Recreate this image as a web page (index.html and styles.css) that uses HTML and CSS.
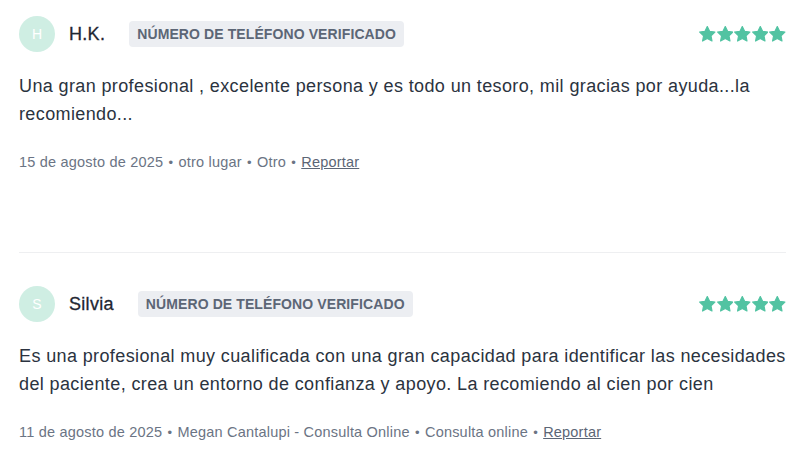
FILE: index.html
```html
<!DOCTYPE html>
<html lang="es">
<head>
 <meta charset="UTF-8">
 <meta name="viewport" content="width=device-width,initial-scale=1.0">
 <title>Opiniones</title>
 <link rel="stylesheet" href="styles.css">
</head>
<body>
<div class="reviews">
 <div class="review">
  <div class="review_head">
   <div class="avatar">H</div>
   <span class="name">H.K.</span>
   <span class="badge">Número de teléfono verificado</span>
   <div class="stars">
    <svg viewBox="2 2.2 20 19"><path d="M12 2.6l2.8 5.9 6.4.8-4.7 4.5 1.2 6.4L12 17.1l-5.7 3.1 1.2-6.4-4.7-4.5 6.4-.8z"/></svg>
    <svg viewBox="2 2.2 20 19"><path d="M12 2.6l2.8 5.9 6.4.8-4.7 4.5 1.2 6.4L12 17.1l-5.7 3.1 1.2-6.4-4.7-4.5 6.4-.8z"/></svg>
    <svg viewBox="2 2.2 20 19"><path d="M12 2.6l2.8 5.9 6.4.8-4.7 4.5 1.2 6.4L12 17.1l-5.7 3.1 1.2-6.4-4.7-4.5 6.4-.8z"/></svg>
    <svg viewBox="2 2.2 20 19"><path d="M12 2.6l2.8 5.9 6.4.8-4.7 4.5 1.2 6.4L12 17.1l-5.7 3.1 1.2-6.4-4.7-4.5 6.4-.8z"/></svg>
    <svg viewBox="2 2.2 20 19"><path d="M12 2.6l2.8 5.9 6.4.8-4.7 4.5 1.2 6.4L12 17.1l-5.7 3.1 1.2-6.4-4.7-4.5 6.4-.8z"/></svg>
   </div>
  </div>
  <p class="review_text">Una gran profesional , excelente persona y es todo un tesoro, mil gracias por ayuda...la recomiendo...</p>
  <p class="meta">15 de agosto de 2025 <span class="dot">•</span> otro lugar <span class="dot">•</span> Otro <span class="dot">•</span> <a href="#">Reportar</a></p>
 </div>
 <div class="review">
  <div class="review_head">
   <div class="avatar">S</div>
   <span class="name">Silvia</span>
   <span class="badge">Número de teléfono verificado</span>
   <div class="stars">
    <svg viewBox="2 2.2 20 19"><path d="M12 2.6l2.8 5.9 6.4.8-4.7 4.5 1.2 6.4L12 17.1l-5.7 3.1 1.2-6.4-4.7-4.5 6.4-.8z"/></svg>
    <svg viewBox="2 2.2 20 19"><path d="M12 2.6l2.8 5.9 6.4.8-4.7 4.5 1.2 6.4L12 17.1l-5.7 3.1 1.2-6.4-4.7-4.5 6.4-.8z"/></svg>
    <svg viewBox="2 2.2 20 19"><path d="M12 2.6l2.8 5.9 6.4.8-4.7 4.5 1.2 6.4L12 17.1l-5.7 3.1 1.2-6.4-4.7-4.5 6.4-.8z"/></svg>
    <svg viewBox="2 2.2 20 19"><path d="M12 2.6l2.8 5.9 6.4.8-4.7 4.5 1.2 6.4L12 17.1l-5.7 3.1 1.2-6.4-4.7-4.5 6.4-.8z"/></svg>
    <svg viewBox="2 2.2 20 19"><path d="M12 2.6l2.8 5.9 6.4.8-4.7 4.5 1.2 6.4L12 17.1l-5.7 3.1 1.2-6.4-4.7-4.5 6.4-.8z"/></svg>
   </div>
  </div>
  <p class="review_text">Es una profesional muy cualificada con una gran capacidad para identificar las necesidades del paciente, crea un entorno de confianza y apoyo. La recomiendo al cien por cien</p>
  <p class="meta">11 de agosto de 2025 <span class="dot">•</span> Megan Cantalupi - Consulta Online <span class="dot">•</span> Consulta online <span class="dot">•</span> <a href="#">Reportar</a></p>
 </div>
</div>
</body>
</html>
```
FILE: styles.css
```css
body{
  margin: 0;
  background: #fff;
  font-family: "Liberation Sans", Arial, sans-serif;
  color: #2b3340;
}
.reviews{
  padding: 0 14px 0 19px;
}
.review{
  padding: 33px 0 79px;
  border-bottom: 1px solid #eeeff1;
}
.review:first-child{
  padding-top: 16px;
}
.review_head{
  display: flex;
  align-items: center;
  height: 36px;
}
.avatar{
  width: 36px;
  height: 36px;
  border-radius: 50%;
  background: #cfeee3;
  color: #fff;
  font-size: 14px;
  display: flex;
  align-items: center;
  justify-content: center;
  margin-right: 14px;
}
.name{
  font-size: 18px;
  color: #1f2733;
  -webkit-text-stroke: 0.3px #1f2733;
  letter-spacing: 0.3px;
  margin-right: 24px;
}
.badge{
  background: #eceef2;
  color: #5c6676;
  font-size: 14px;
  font-weight: bold;
  letter-spacing: 0.1px;
  text-transform: uppercase;
  padding: 0 8px;
  line-height: 26px;
  border-radius: 4px;
}
.stars{
  margin-left: auto;
  display: flex;
  gap: 1px;
}
.stars svg{
  width: 16.6px;
  height: 16px;
  fill: #52c3a2;
  stroke: #52c3a2;
  stroke-width: 1.4;
  stroke-linejoin: round;
}
.review_text{
  margin: 20px 0 0;
  font-size: 18px;
  line-height: 28px;
  letter-spacing: 0.38px;
}
.meta{
  margin: 24px 0 0;
  font-size: 14.5px;
  line-height: 20px;
  letter-spacing: 0.2px;
  color: #6b7484;
}
.meta .dot{
  font-size: 13px;
  margin: 0 1px;
}
.meta a{
  color: #5c6676;
  text-decoration: underline;
}
```
